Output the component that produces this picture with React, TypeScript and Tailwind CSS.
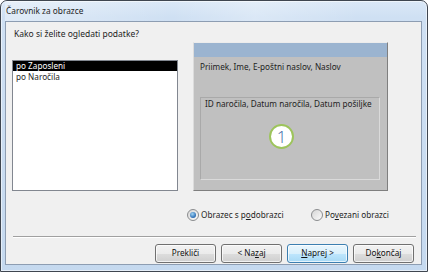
import React from "react";

function Radio({ checked, children }: { checked?: boolean; children: React.ReactNode }) {
  return (
    <div className="flex items-center gap-[2px]">
      <span className="flex h-[12px] w-[12px] items-center justify-center rounded-full border border-[#8a8c8e] bg-[linear-gradient(135deg,#d6d6d6,#fbfbfb)]">
        {checked && (
          <span className="h-[6px] w-[6px] rounded-full bg-[radial-gradient(circle_at_40%_35%,#9fd4f4,#2a6bb3_70%,#1c4f8c)]" />
        )}
      </span>
      <span>{children}</span>
    </div>
  );
}

function WinButton({ children, primary }: { children: React.ReactNode; primary?: boolean }) {
  return (
    <button
      className={
        "flex h-[19px] w-[61px] items-center justify-center rounded-[3px] border text-[8.2px] text-[#111] " +
        (primary
          ? "border-[#3c7fb1] bg-[linear-gradient(180deg,#eaf6fd_0%,#d9f0fc_50%,#bee6fd_51%,#a7d9f5_100%)] shadow-[inset_0_0_0_1px_rgba(255,255,255,0.7)]"
          : "border-[#707070] bg-[linear-gradient(180deg,#f2f2f2_0%,#ebebeb_50%,#dddddd_51%,#cfcfcf_100%)] shadow-[inset_0_0_0_1px_rgba(255,255,255,0.7)]")
      }
    >
      {children}
    </button>
  );
}

export default function App() {
  return (
    <div className="h-[272px] w-[428px] overflow-hidden bg-white font-['Noto_Sans',sans-serif] text-[8.2px] text-[#1e1e1e]">
      <div className="flex h-full flex-col rounded-t-[7px] border border-[#3f4650] bg-[linear-gradient(180deg,#dbe8f7_0%,#cfe0f3_6%,#c5d9ef_100%)] pb-[6px] pl-[4px] pr-[5px] shadow-[inset_0_0_0_1px_rgba(255,255,255,0.55)]">
        <div className="flex h-[20px] shrink-0 items-center bg-[linear-gradient(90deg,rgba(255,255,255,0.35),rgba(255,255,255,0)_40%,rgba(255,255,255,0.25)_60%,rgba(255,255,255,0)_85%)] pl-[1px] text-[8.3px] text-[#1e1e1e]">
          Čarovnik za obrazce
        </div>
        <div className="flex h-[244px] flex-col border border-[#8d9db2] bg-[#f0f0f0]">
          <div className="pl-[8px] pt-[6px] text-[8.5px] leading-[12px]">Kako si želite ogledati podatke?</div>

          <div className="mt-[2px] flex items-start">
            <div className="ml-[6px] mt-[18px] h-[131px] w-[166px] border border-[#828790] bg-white leading-[11px]">
              <div className="h-[10px] bg-black pl-[3px] leading-[10px] text-white">po Zaposleni</div>
              <div className="h-[11px] pl-[3px]">po Naročila</div>
            </div>

            <div className="ml-[15px] flex h-[149px] w-[195px] flex-col border border-b-[#7f7f7f] border-l-[#dcdcdc] border-r-[#7f7f7f] border-t-[#ececec] bg-[#c0c0c0]">
              <div className="h-[14px] bg-[#9bb4d0]" />
              <div className="mt-[4px] pl-[6px] leading-[12px]">Priimek, Ime, E-poštni naslov, Naslov</div>
              <div className="ml-[6px] mt-[24px] h-[83px] w-[180px] border border-b-[#dadada] border-l-[#a9a9a9] border-r-[#dadada] border-t-[#a9a9a9]">
                <div className="pl-[4px] leading-[12px]">ID naročila, Datum naročila, Datum pošiljke</div>
                <div className="ml-[68px] mt-[14px] flex h-[25px] w-[25px] items-center justify-center rounded-full border-2 border-[#9dc45c] bg-white font-['Open_Sans',sans-serif] text-[17px] font-light leading-none text-[#3b67a6]">
                  1
                </div>
              </div>
            </div>
          </div>

          <div className="ml-[181px] mt-[17px] flex h-[14px] items-center">
            <div className="w-[124px]">
              <Radio checked>
                Obrazec s p<span className="underline">o</span>dobrazci
              </Radio>
            </div>
            <Radio>
              Po<span className="underline">v</span>ezani obrazci
            </Radio>
          </div>

          <div className="ml-[7px] mr-[5px] mt-[14px] h-[2px] border-b border-t border-b-white border-t-[#a0a0a0]" />

          <div className="ml-[149px] mt-[6px] flex gap-[5px]">
            <WinButton>Prekliči</WinButton>
            <WinButton>
              &lt; Na<span className="underline">z</span>aj
            </WinButton>
            <WinButton primary>
              <span className="underline">N</span>aprej &gt;
            </WinButton>
            <WinButton>
              Do<span className="underline">k</span>ončaj
            </WinButton>
          </div>
        </div>
      </div>
    </div>
  );
}
